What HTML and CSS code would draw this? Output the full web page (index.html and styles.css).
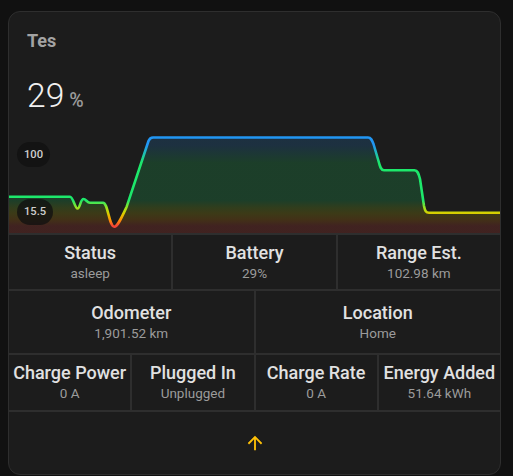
FILE: index.html
```html
<!DOCTYPE html>
<html lang="en">
<head>
<meta charset="utf-8">
<title>Tes</title>
<link rel="stylesheet" href="styles.css">
</head>
<body>
<div class="card">
  <div class="head">
    <div class="name">Tes</div>
    <div class="state">
      <span class="state-value">29</span>
      <span class="state-unit">%</span>
    </div>
  </div>
  <div class="chart">
    <svg class="graph" viewBox="0 0 491 117" preserveAspectRatio="none">
      <defs>
        <linearGradient id="lineGrad" gradientUnits="userSpaceOnUse" x1="0" y1="0" x2="0" y2="117">
          <stop offset="0.18" stop-color="#2196f3"/>
          <stop offset="0.25" stop-color="#2196f3"/>
          <stop offset="0.40" stop-color="#1de86b"/>
          <stop offset="0.72" stop-color="#1de86b"/>
          <stop offset="0.785" stop-color="#9be21f"/>
          <stop offset="0.83" stop-color="#d8d000"/>
          <stop offset="0.885" stop-color="#ff9800"/>
          <stop offset="0.94" stop-color="#f44336"/>
          <stop offset="1" stop-color="#f44336"/>
        </linearGradient>
      </defs>
      <path class="area" fill="url(#lineGrad)" d="M0,80.7 L61,80.7 C64,80.7 66,92.5 68.5,92.5 C71,92.5 71.5,83 74.5,83 C77,83 78,86.7 81,86.7 L94,86.7 C99,86.7 100,110.7 105.3,110.7 C108.5,110.7 111.5,104 117.7,90.7 L139.5,25 C140.5,22.5 141.5,21.5 144,21.5 L359,21.5 C362,21.5 363,24 364.5,28 L369.5,45 C371,51 372,54.3 375,54.3 L405.5,54.3 C408.5,54.3 409.5,57 411,63 L415,90 C416,95 417,96.7 420,96.7 L491,96.7 L491,117 L0,117 Z"/>
      <path class="line" stroke="url(#lineGrad)" d="M0,80.7 L61,80.7 C64,80.7 66,92.5 68.5,92.5 C71,92.5 71.5,83 74.5,83 C77,83 78,86.7 81,86.7 L94,86.7 C99,86.7 100,110.7 105.3,110.7 C108.5,110.7 111.5,104 117.7,90.7 L139.5,25 C140.5,22.5 141.5,21.5 144,21.5 L359,21.5 C362,21.5 363,24 364.5,28 L369.5,45 C371,51 372,54.3 375,54.3 L405.5,54.3 C408.5,54.3 409.5,57 411,63 L415,90 C416,95 417,96.7 420,96.7 L491,96.7"/>
    </svg>
    <span class="label label-max">100</span>
    <span class="label label-min">15.5</span>
  </div>
  <div class="grid">
    <div class="row row-3 row-a">
      <div class="cell"><div class="c-title">Status</div><div class="c-value">asleep</div></div>
      <div class="cell"><div class="c-title">Battery</div><div class="c-value">29%</div></div>
      <div class="cell"><div class="c-title">Range Est.</div><div class="c-value">102.98 km</div></div>
    </div>
    <div class="row row-2 row-b">
      <div class="cell"><div class="c-title">Odometer</div><div class="c-value">1,901.52 km</div></div>
      <div class="cell"><div class="c-title">Location</div><div class="c-value">Home</div></div>
    </div>
    <div class="row row-4 row-c">
      <div class="cell"><div class="c-title">Charge Power</div><div class="c-value">0 A</div></div>
      <div class="cell"><div class="c-title">Plugged In</div><div class="c-value">Unplugged</div></div>
      <div class="cell"><div class="c-title">Charge Rate</div><div class="c-value">0 A</div></div>
      <div class="cell"><div class="c-title">Energy Added</div><div class="c-value">51.64 kWh</div></div>
    </div>
  </div>
  <div class="footer">
    <svg class="arrow" viewBox="0 0 24 24"><path d="M13,20H11V8L5.5,13.5L4.08,12.08L12,4.16L19.92,12.08L18.5,13.5L13,8V20Z"/></svg>
  </div>
</div>
</body>
</html>
```
FILE: styles.css
```css
html, body {
  margin: 0;
  background: #111111;
}
body {
  padding: 11px 0 0 8px;
  font-family: Roboto, "Liberation Sans", sans-serif;
  overflow: hidden;
}
.card {
  box-sizing: border-box;
  width: 493px;
  height: 464px;
  background: #1c1c1c;
  border: 1px solid #2e2e2e;
  border-radius: 12px;
  overflow: hidden;
  display: flex;
  flex-direction: column;
}
.head {
  padding: 18px 18px 0 18px;
  height: 86px;
}
.name {
  font-size: 18px;
  line-height: 22px;
  font-weight: 700;
  color: #a3a3a3;
}
.state {
  margin-top: 24px;
  display: flex;
  align-items: baseline;
  line-height: 40px;
}
.state-value {
  font-size: 33.6px;
  font-weight: 300;
  color: #f0f0f0;
}
.state-unit {
  font-size: 19.6px;
  font-weight: 500;
  color: #9a9a9a;
  margin-left: 5px;
}
.chart {
  position: relative;
  height: 117px;
}
.graph {
  display: block;
  width: 100%;
  height: 117px;
}
.area {
  fill-opacity: 0.17;
}
.line {
  fill: none;
  stroke-width: 2.6;
  stroke-linejoin: round;
  stroke-linecap: round;
}
.label {
  position: absolute;
  left: 8px;
  height: 25px;
  line-height: 25px;
  padding: 0 7px;
  border-radius: 13px;
  background: rgba(17, 17, 17, 0.78);
  color: #cfcfcf;
  font-size: 11.2px;
  font-weight: 500;
}
.label-max {
  top: 26px;
}
.label-min {
  bottom: 8px;
  height: 26px;
  line-height: 26px;
}
.grid {
  background: #2e2e2e;
  padding: 2px 0;
  display: flex;
  flex-direction: column;
  gap: 2px;
}
.row {
  display: grid;
  column-gap: 2px;
}
.row-3 { grid-template-columns: 1fr 1fr 1fr; }
.row-2 { grid-template-columns: 1fr 1fr; }
.row-4 { grid-template-columns: 1fr 1fr 1fr 1fr; }
.row-a { height: 54px; }
.row-b { height: 62px; }
.row-c { height: 55px; }
.cell {
  background: #1c1c1c;
  display: flex;
  flex-direction: column;
  align-items: center;
  justify-content: center;
  text-align: center;
  white-space: nowrap;
}
.c-title {
  font-size: 18px;
  line-height: 22px;
  font-weight: 500;
  color: #e1e1e1;
}
.c-value {
  font-size: 13.5px;
  line-height: 19px;
  color: #9b9b9b;
}
.footer {
  flex: 1;
  display: flex;
  align-items: center;
  justify-content: center;
}
.arrow {
  width: 22px;
  height: 22px;
  fill: #ffc107;
}
```
